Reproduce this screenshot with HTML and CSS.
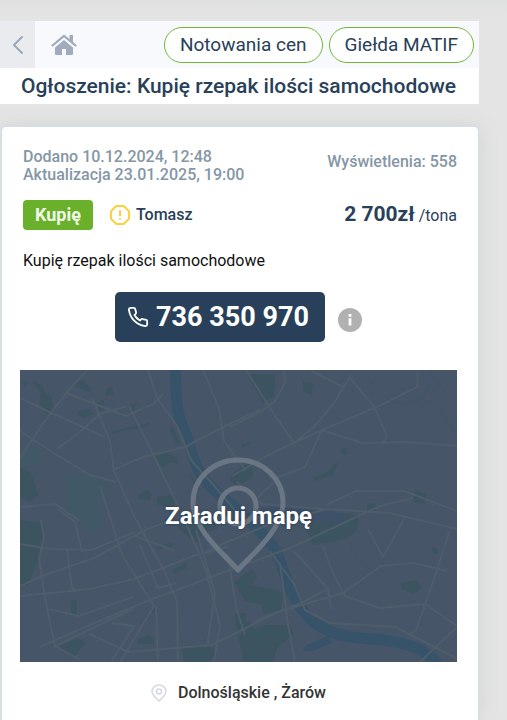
FILE: index.html
```html
<!DOCTYPE html>
<html lang="pl">
<head>
<meta charset="utf-8">
<meta name="viewport" content="width=device-width, initial-scale=1">
<title>Ogłoszenie: Kupię rzepak ilości samochodowe</title>
<link rel="stylesheet" href="styles.css">
</head>
<body>
<main class="page">
  <header class="top">
    <nav class="nav">
      <a class="back" href="#" aria-label="Wstecz"><svg width="12" height="20" viewBox="0 0 12 20"><path d="M10 2L2 10l8 8" fill="none" stroke="#9aa7b8" stroke-width="2" stroke-linecap="round" stroke-linejoin="round"/></svg></a>
      <a class="home" href="#" aria-label="Strona główna"><svg width="26" height="22" viewBox="0 0 26 22" fill="#a0abbd"><path d="M13 6l9 7.500V20q0 1-1 1h-6v-6h-4v6H5q-1 0-1-1v-6.500z"/><path d="M1.500 11.500L13 1.800l11.500 9.700" fill="none" stroke="#a0abbd" stroke-width="2.200" stroke-linecap="round" stroke-linejoin="round"/><path d="M18.500 1H22v8l-3.500-3z"/></svg></a>
      <a class="pill pill-first" href="#">Notowania cen</a>
      <a class="pill" href="#">Giełda MATIF</a>
    </nav>
    <h1 class="title">Ogłoszenie: Kupię rzepak ilości samochodowe</h1>
  </header>

  <article class="card">
    <div class="row meta">
      <div>Dodano 10.12.2024, 12:48<br>Aktualizacja 23.01.2025, 19:00</div>
      <div class="views">Wyświetlenia: 558</div>
    </div>
    <div class="row offer">
      <div class="seller">
        <span class="badge">Kupię</span>
        <svg width="20" height="20" viewBox="0 0 20 20" fill="none" stroke="#fbd13d" stroke-width="2" stroke-linecap="round" stroke-linejoin="round"><path d="M6.300 1h7.400L19 6.300v7.400L13.700 19H6.300L1 13.700V6.300zM10 6v4.500M10 14v.1"/></svg>
        <span class="name">Tomasz</span>
      </div>
      <div class="price"><strong>2 700zł</strong> /tona</div>
    </div>
    <p class="description">Kupię rzepak ilości samochodowe</p>
    <div class="contact">
      <a class="phone" href="tel:736350970"><svg width="22" height="22" viewBox="0 0 24 24" fill="none" stroke="#fff" stroke-width="2" stroke-linecap="round" stroke-linejoin="round"><path d="M22 16.900v3a2 2 0 0 1-2.200 2 19.800 19.800 0 0 1-8.600-3.100 19.500 19.500 0 0 1-6-6A19.800 19.800 0 0 1 2.100 4.200 2 2 0 0 1 4.100 2h3a2 2 0 0 1 2 1.700c.1 1 .4 1.900.7 2.800a2 2 0 0 1-.4 2.100L8.100 9.900a16 16 0 0 0 6 6l1.300-1.300a2 2 0 0 1 2.100-.4c.9.300 1.800.6 2.800.7a2 2 0 0 1 1.700 2z"/></svg><span>736 350 970</span></a>
      <button class="info" type="button" aria-label="Informacja"><svg width="24" height="24" viewBox="0 0 26 26"><circle cx="13" cy="13" r="13" fill="#b1b1b1"/><path d="M11.500 6.500h3v3h-3zM11.500 11h3v8h-3z" fill="#fff"/></svg></button>
    </div>
    <button class="map" type="button">
      <svg class="map-art" viewBox="0 0 437 292" preserveAspectRatio="xMidYMid slice" aria-hidden="true">
        <g fill="#3b5460">
          <path d="M2 10l7 3-5 4zM12 11l10 4 3 8 7 4 1 10-6 8-8-12 2-9zM55 13l7-3 9 8-1 4-15-6zM86 19l6-2 2 7-8 2zM58 41l12-2 3 5-10 4-5-3zM77 33l7-4v10l-5 2zM109 35l9-3-3 5-3 9zM92 61l37-8v3l-37 7zM151 54l9 19-2 3-8-15zM135 87l11-4 11 5 2 6-10-2-6 6-7-4zM0 97l12 7 6 21-9 7-9-5zM119 125l7-5 6 4-2 6-11-1zM137 127l18-2 1 7-8 5-10-2zM170 104l7 7 4 11-6-6z"/>
          <path d="M0 150l24 3v20l-7 21-10 22-7-2zM157 157l12-8 24 1 5 9-15 4-7 10zM51 230h6v14h-6zM39 276l18-8 9 5-12 13zM118 269l10-4 6 5v4h-16zM132 238l4-2 2 7h-6zM162 276l25-1 10 6-8 11h-25zM152 200l14-7 1 5-13 6zM136 178l15-6 3 4-16 4z"/>
          <path d="M227 4l28 1-1 22-11 5zM283 11l11 3-3 11-8-4zM221 75l8-4 1 3-8 4zM210 108l11-12 10-2 3 12-15 9-9-3zM294 107l12-4 13-12-7 15-19 5zM321 79l6-1 1 6-6 1zM393 124l3-3 10 3-2 9h-10zM347 134l8-1v7l-8 1zM286 151l24-10 29 5-2 15-12 8-32 6-5-11zM380 213l15-3 7 7-8 7-12-5zM412 177l6 2-1 5-5-2zM214 212l18-13 5 8-6 8 15 3 17 5-2 17-16 4-5-10-15-3zM214 243h12v8l9 4-5 10-13-5zM218 265l28-10 24 0 3 9-16 14-4 14h-29z"/>
        </g>
        <path d="M0 84q10-10 20-5l-2 17H0zM46 107l22-2 20 9-8 16 3 25-11 9-13-14-14-9z" fill="#415966"/>
        <path d="M155-4c2 22-1 42 8 61 7 16 9 32 17 46 9 16 30 29 43 42 16 16 29 24 37 46 7 22 17 49 35 62 22 16 47 15 68 17 24 3 43 9 55 25" fill="none" stroke="#365369" stroke-width="11"/>
        <path d="M240 138l25-3 35 5 28 6-10 7-60-3z" fill="#3f5168"/><path d="M285 276l22-10 6 6-20 9-10 0z" fill="#38526a"/>
        <g fill="none" stroke="#4e5d6b" stroke-width="2" stroke-linejoin="round">
          <path d="M0 88L22 55 46 23 67 0M0 28l25 12 60 27M46 23l60 23 27-12 10-10M72 28l18 43 4 30 21 47 30 54 12 30 1 60M0 61l37 24 33 20 26 7M37 79l23-17 20-18 27-8M93 100l30-13 42-10 38-20 37-17M109 36l25 50 28 58 24 56 14 55-6 37M128 0l9 28 20 28 14 34 25 28 25 29M183 0l16 38 5 33 22 30"/>
          <path d="M0 137l35-3 25 17M21 150l3 18-5 20 6 40 10 48 25 14M39 140l16 12 7 30M47 180l5 38 4 3M0 216l22-10 52-18 51-28 28-10M0 226l70-7 44-10 62-24 32-8M0 174l30 5 41 1 44-18M20 277l45-20 65-27 80-30 60-22 90-42 33-8M34 277l45-22 34-16M28 239l31 7 54-19M70 264l38 18 84-7 66-33 65-19 38-27 33-3 33 8M100 292l34-56-32-51-22-69M136 236l2 56M92 253l22 3-23 36M115 166l40 15M120 175l18 43 18-5M176 160l19 63-8 54M186 181l59-25 62-17M208 184l8 53 9 28"/>
          <path d="M226 0l24 38 24 35 20-16 20-24 17-28M210 57l32-16 13-10 10-18-1-13M212 106l40-23 50-23 57-24 38-19 1-17M290 0l33 17M330 8l25 30 12 28-4 7M302 60l40 13 45-1 50 4M302 60l-17 37-26 10-25 24M306 135l30-14h48l53 20M217 112l25 22 46 4 82 5 67 16M250 181l24 33 11 26 25 13 65 4 61 31M303 176l10 28 12 22 35 12 45-4 32 22M274 181l34 38 3 20M348 159l15 28 21-38M430 160l-17 52-17 48-6 4M400 292l36-34M260 193l8 62 7 37M236 251l45-18 27-14"/>
        </g>
        <g fill="none" stroke="#40566a"><path d="M341 3l17 14 10 13 16 5 17-6 13-20M355 8l-9 17M396 25l23 14 18 25M402 35l6 16M408 0l20 27M410 24l22-18M328 169l8 20 25 18"/></g>
        <g fill="none" stroke="#6b7684" stroke-width="5" stroke-linejoin="round"><path d="M218 200C204 184 173 160 173 132a45 42 0 0 1 90 0c0 28-31 52-45 68z"/><circle cx="218" cy="136" r="18"/></g>
      </svg>
      <span class="map-label">Załaduj mapę</span>
    </button>
    <div class="location">
      <svg width="16" height="18" viewBox="0 0 16 18" fill="none" stroke="#d3dae2" stroke-width="1.500"><path d="M8 17C5 14 1 11 1 7.500a7 6.500 0 0 1 14 0C15 11 11 14 8 17z"/><circle cx="8" cy="7.500" r="2.500"/></svg>
      <span>Dolnośląskie , Żarów</span>
    </div>
  </article>
</main>
</body>
</html>
```
FILE: styles.css
```css
* { box-sizing: border-box; }
body {
  margin: 0;
  background: linear-gradient(#dfe1e0, #e4e4e4 20px);
  color: #284059;
  font: 16px/18px Roboto, sans-serif;
  overflow-x: hidden;
}
a { color: inherit; text-decoration: none; }
button { border: 0; padding: 0; background: none; font: inherit; cursor: pointer; }
svg { display: block; flex: none; }
.page {
  display: flex;
  flex-direction: column;
  gap: 22px;
  min-height: 100vh;
  padding-top: 21px;
  margin-right: 28px;
}
.top { background: #fff; }
.nav {
  display: flex;
  align-items: center;
  gap: 6px;
  height: 47px;
  padding-right: 5px;
  background: #f7f9fc;
}
.back {
  display: flex;
  align-items: center;
  justify-content: center;
  align-self: stretch;
  width: 35px;
  background: #e9ebee;
}
.home { margin-left: 10px; }
.pill {
  padding: 5px 15px;
  border: 1px solid #70b737;
  border-radius: 18px;
  background: #fff;
  font-size: 19px;
  line-height: 24px;
  white-space: nowrap;
}
.pill-first { margin-left: auto; }
.title {
  margin: 0;
  padding: 0 16px 0 21px;
  font-size: 21px;
  line-height: 36px;
  font-weight: 500;
}
.card {
  flex: 1;
  padding: 21px 21px 16px 18px;
  border: 1px solid #d0e0e6;
  border-bottom: 0;
  border-radius: 5px 5px 0 0;
  margin-left: 1px;
  background: #fff;
  box-shadow: 0 0 20px #cfd5d4;
}
.row {
  display: flex;
  align-items: center;
  justify-content: space-between;
  padding-left: 3px;
}
.meta { color: #8596a6; font-weight: 500; }
.views { padding-bottom: 8px; }
.offer { margin-top: 16px; }
.seller { display: flex; align-items: center; }
.badge {
  margin-right: 17px;
  padding: 0 12px;
  border-radius: 4px;
  background: #6ab02a;
  color: #eff8e8;
  font-size: 18px;
  line-height: 30px;
  font-weight: 700;
}
.name { margin-left: 6px; font-weight: 500; }
.price strong { font-size: 21px; }
.description { margin: 22px 0; padding-left: 3px; color: #111; }
.contact { display: flex; align-items: center; justify-content: center; gap: 13px; }
.phone {
  display: flex;
  align-items: center;
  gap: 7px;
  padding: 0 16px 0 12px;
  border-radius: 5px;
  background: #28405a;
  color: #fff;
  font-size: 27px;
  line-height: 50px;
  font-weight: 700;
}
.info { padding-top: 6px; }
.map {
  display: grid;
  place-items: center;
  width: 100%;
  margin-top: 28px;
  background: #465568;
}
.map-art, .map-label { grid-area: 1 / 1; }
.map-art { width: 100%; height: auto; }
.map-label {
  color: #fff;
  font-size: 24px;
  line-height: 28px;
  font-weight: 700;
  text-shadow: 0 0 3px #26384c;
}
.location {
  display: flex;
  align-items: center;
  justify-content: center;
  gap: 11px;
  margin-top: 22px;
  color: #333;
  font-weight: 500;
}
```
